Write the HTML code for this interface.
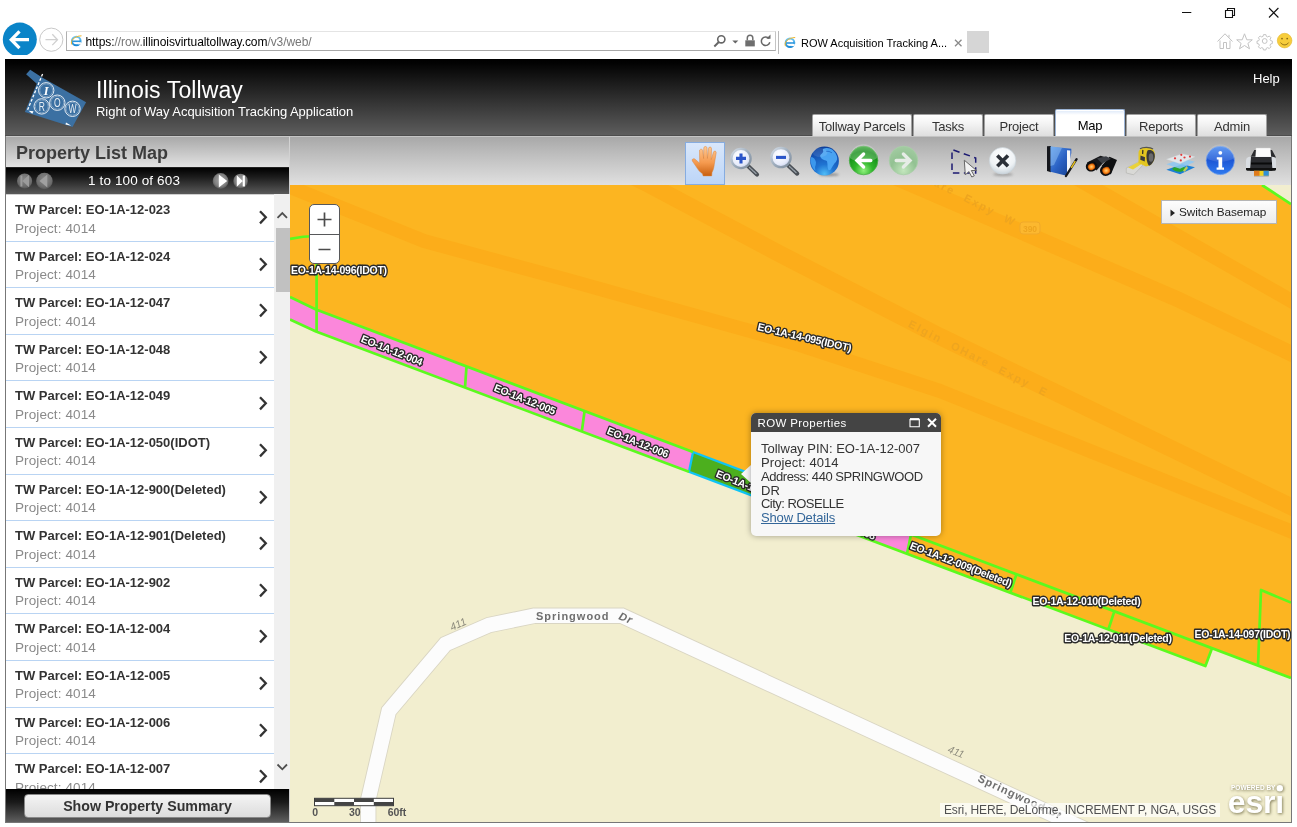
<!DOCTYPE html>
<html>
<head>
<meta charset="utf-8">
<title>ROW Acquisition Tracking Application</title>
<style>
*{box-sizing:border-box;margin:0;padding:0}
html,body{width:1297px;height:827px;overflow:hidden;background:#fff;font-family:"Liberation Sans",sans-serif;}
#chrome,#page{will-change:transform}
.abs{position:absolute}
#chrome{position:absolute;left:0;top:0;width:1297px;height:59px;background:#fff}
#addr{position:absolute;left:66px;top:31px;width:710px;height:20px;border:1px solid #b0b0b0;border-top-color:#e4e4e4;border-bottom-color:#a8a8a8;border-right-color:#c4c4c4;background:#fff}
#url{position:absolute;left:85.500px;top:34.700px;font-size:12px;line-height:14px;color:#000;letter-spacing:-.07px;white-space:nowrap}
#url span{color:#777}
#tab{position:absolute;left:779px;top:31px;width:188px;height:23px;background:#fff}
#tabtxt{position:absolute;left:801px;top:36px;font-size:11px;line-height:14px;color:#000;white-space:nowrap}
#newtab{position:absolute;left:967px;top:31px;width:22px;height:22px;background:#d6d6d6}
/* page */
#page{position:absolute;left:5px;top:59px;width:1287px;height:764px;background:#777;overflow:hidden}
#hdr{position:absolute;left:0;top:0;width:1287px;height:77px;background:linear-gradient(#000 0%,#030303 6%,#5d5d5d 100%);border-bottom:1px solid #4d4d4d}
#t1{position:absolute;left:91px;top:17px;font-size:23px;line-height:28px;color:#fff;white-space:nowrap;letter-spacing:.1px}
#t2{position:absolute;left:91px;top:45px;font-size:13px;line-height:16px;color:#fff;white-space:nowrap;letter-spacing:-.04px}
#help{position:absolute;left:1248px;top:12px;font-size:13px;line-height:15px;color:#fff}
.tab{position:absolute;top:55px;height:22px;border:1px solid #a0a0a0;border-bottom:none;border-radius:2px 2px 0 0;background:linear-gradient(#fff 0%,#f4f4f4 40%,#dedede 100%);font-size:13px;letter-spacing:-.2px;line-height:23px;text-align:center;color:#333;white-space:nowrap;box-shadow:inset 0 1px 0 #fff}
.tab.sel{top:50px;height:27px;background:linear-gradient(#dbe7f8 0,#fff 5px,#fff 100%);line-height:31px;color:#000;border-color:#9bb3d4}
/* left */
#left{position:absolute;left:1px;top:77px;width:284px;height:686px;background:#cfcfcf}
#ltitle{position:absolute;left:0;top:0;width:283px;height:31px;background:linear-gradient(#a9a9a9,#e2e2e2);border-top:1px solid #c8c8c8;font-weight:bold;font-size:18px;line-height:32px;color:#3c3c3c;padding-left:10px;white-space:nowrap}
#pager{position:absolute;left:0;top:31px;width:283px;height:27px;background:linear-gradient(#000 0%,#1c1c1c 35%,#5a5a5a 100%);border-top:1px solid #222;}
#pgtxt{position:absolute;left:82px;top:5px;font-size:13.5px;line-height:16px;color:#fff;white-space:nowrap;letter-spacing:.13px}
#list{position:absolute;left:0;top:59px;width:268px;height:594px;overflow:hidden;background:#fff}
.it{position:relative;height:46.6px;border-bottom:1px solid #b9d4f3;}
.it b{position:absolute;left:9px;top:7px;font-size:13px;line-height:16px;color:#333;white-space:nowrap;font-weight:bold}
.it i{position:absolute;left:9px;top:25.500px;font-size:13.5px;line-height:16px;color:#8a8a8a;white-space:nowrap;font-style:normal;letter-spacing:.1px}
.it svg{position:absolute;left:251px;top:13px}
#sb{position:absolute;left:268px;top:58px;width:16px;height:595px;background:#f0f0f0}
#sbth{position:absolute;left:1.500px;top:34px;width:14px;height:64px;background:#c1c1c1}
#lbot{position:absolute;left:0;top:653px;width:283px;height:33px;background:linear-gradient(#000 0%,#1a1a1a 40%,#5e5e5e 100%)}
#sps{position:absolute;left:18px;top:5px;width:247px;height:24px;background:linear-gradient(#f4f4f4,#dcdcdc);border:1px solid #888;border-radius:4px;font-weight:bold;font-size:14.2px;line-height:22px;text-align:center;color:#333}
/* toolbar */
#tbar{position:absolute;left:284px;top:77px;width:1002px;border-left:1px solid #d2d2d2;height:49px;background:linear-gradient(#a8a8a8 0%,#bdbdbd 35%,#e0e0e0 100%);border-top:1px solid #c4c4c4}
#handsel{position:absolute;left:395px;top:5px;width:40px;height:43px;border:1px solid #86ace0;background:linear-gradient(#d9e7fb,#bcd5f7)}
/* map */
#map{position:absolute;left:285px;top:126px;width:1001px;height:637px;background:#f2eecf;overflow:hidden}
</style>
</head>
<body>
<div id="chrome">
  <div id="addr"></div>
  <div id="url">https:<span>//row.</span>illinoisvirtualtollway.com<span>/v3/web/</span></div>
  <div id="tab"></div>
  <div id="tabtxt">ROW Acquisition Tracking A...</div>
  <div id="newtab"></div>
  <!--CHROMEICONS-->
<svg class="abs" style="left:0;top:0" width="1297" height="59" viewBox="0 0 1297 59">
<defs><clipPath id="bk"><rect x="0" y="0" width="60" height="55"/></clipPath>
<linearGradient id="gie" x1="0" y1="0" x2="0" y2="1"><stop offset="0" stop-color="#6cc6f5"/><stop offset="1" stop-color="#1b8ad6"/></linearGradient></defs>
<!-- back -->
<g clip-path="url(#bk)"><circle cx="19.800" cy="39.600" r="17" fill="#0a84c8"/></g>
<path d="M11.500 39.700H29M19.500 31.300L11.300 39.700L19.500 48.100" fill="none" stroke="#fff" stroke-width="3.300" stroke-linejoin="miter"/>
<!-- forward -->
<circle cx="51.300" cy="39.700" r="11.600" fill="#fff" stroke="#c9c9c9" stroke-width="1"/>
<path d="M45.500 39.700H57M52.300 34.300L57.500 39.700L52.300 45.100" fill="none" stroke="#d0d0d0" stroke-width="1.300"/>
<!-- IE favicon in address -->
<g transform="translate(71 35)"><circle cx="5.300" cy="6" r="4.300" fill="none" stroke="url(#gie)" stroke-width="2"/><path d="M1.500 6.300H9.500" stroke="#2a95dc" stroke-width="1.600"/><path d="M6.500 8.300H10" stroke="#f5f5f5" stroke-width="2.200"/><path d="M.8 9.500C-1 6 3 1 10.500 .8" fill="none" stroke="#f0b62b" stroke-width="1"/></g>
<!-- search -->
<circle cx="721.300" cy="39.300" r="3.600" fill="none" stroke="#666" stroke-width="1.600"/><path d="M718.800 42L714.300 46.500" stroke="#666" stroke-width="1.900"/>
<path d="M732.300 40.500H738.300L735.300 43.600Z" fill="#666"/>
<!-- lock -->
<path d="M745.300 40.300H754.800V46.400H745.300Z" fill="#6e6e6e"/><path d="M747.300 40.300V38C747.300 34.300 752.800 34.300 752.800 38V40.300" fill="none" stroke="#6e6e6e" stroke-width="1.500"/>
<!-- refresh -->
<path d="M769 38.500A4.300 4.300 0 1 0 769.800 42.300" fill="none" stroke="#666" stroke-width="1.500"/><path d="M766.300 38.800H770.500V34.500Z" fill="#666"/>
<!-- tab sep -->
<path d="M778.500 31V54" stroke="#b9b9b9" stroke-width="1"/>
<!-- IE favicon in tab -->
<g transform="translate(784.500 36.500)"><circle cx="5.500" cy="6.200" r="4.300" fill="none" stroke="url(#gie)" stroke-width="2"/><path d="M1.700 6.500H9.700" stroke="#2a95dc" stroke-width="1.600"/><path d="M6.700 8.500H10.200" stroke="#fff" stroke-width="2.200"/><path d="M1 9.700C-.8 6.200 3.200 1.200 10.700 1" fill="none" stroke="#f0b62b" stroke-width="1"/></g>
<!-- tab close -->
<path d="M955 39.800L961.500 46.300M961.500 39.800L955 46.300" stroke="#8a8a8a" stroke-width="1.300"/>
<!-- window controls -->
<path d="M1182 12.500H1191.300" stroke="#111" stroke-width="1"/>
<path d="M1225.500 10.500H1232.500V17.500H1225.500Z" fill="none" stroke="#111" stroke-width="1.100"/><path d="M1227.500 10.500V8.500H1234.500V15.500H1232.500" fill="none" stroke="#111" stroke-width="1.100"/>
<path d="M1269 8L1278.400 17.500M1278.400 8L1269 17.500" stroke="#111" stroke-width="1.100"/>
<!-- home -->
<path d="M1217.500 41.500L1225 33.800L1232.500 41.500M1220 40.500V48.500H1223.500V42.500H1226.500V48.500H1230V40.500M1229 37.500V34.800" fill="none" stroke="#c3c3c3" stroke-width="1"/>
<!-- star -->
<path d="M1244.500 33.800L1246.800 39.800L1252.300 39.800L1247.900 43.400L1249.500 48.800L1244.500 45.500L1239.500 48.800L1241.100 43.400L1236.700 39.800L1242.200 39.800Z" fill="none" stroke="#c3c3c3" stroke-width="1"/>
<!-- gear -->
<g fill="none" stroke="#c3c3c3" stroke-width="1.150" transform="translate(1264.700 41) scale(.86) translate(-1264.700 -41)"><circle cx="1264.700" cy="41" r="2.800"/><circle cx="1264.700" cy="41" r="5.700" stroke-dasharray="2.600 1.880" stroke-width="3.200" opacity=".0"/>
<path d="M1263.300 33.600h2.800l.5 2 1.600.7 1.800-1.100 2 2-1.100 1.800.7 1.600 2 .5v2.800l-2 .5-.7 1.600 1.100 1.800-2 2-1.800-1.100-1.600.7-.5 2h-2.800l-.5-2-1.600-.7-1.800 1.100-2-2 1.100-1.800-.7-1.600-2-.5v-2.800l2-.5.7-1.600-1.100-1.800 2-2 1.800 1.100 1.600-.7z"/></g>
<!-- smiley -->
<circle cx="1284.600" cy="40.600" r="7.300" fill="#f7cd3b" stroke="#e3b52b" stroke-width=".6"/>
<circle cx="1282" cy="38.600" r=".9" fill="#8a6a14"/><circle cx="1287.200" cy="38.600" r=".9" fill="#8a6a14"/>
<path d="M1280.600 42.600C1282.500 45.600 1286.700 45.600 1288.600 42.600" fill="none" stroke="#8a6a14" stroke-width="1"/>
</svg>
<!--/CHROMEICONS-->
</div>
<div id="page">
  <div id="hdr">
    <!--LOGO-->
<svg class="abs" style="left:0;top:0" width="120" height="77" viewBox="5 59 120 77" font-family="Liberation Sans, sans-serif">
 <path d="M26.100 74.300L30.200 69.800L42.100 77.600L86.100 102.300L72.500 126.900L24.900 112.100L36.800 83.800Z" fill="#3b70a2"/>
 <path d="M42.600 74L27.300 110.500" stroke="#fff" stroke-width="1.300" stroke-dasharray="2.800 1.700" fill="none"/>
 <path d="M28.500 110.800L33.500 111.200L32.300 113.800ZM66 122.500L71.300 125.800L65.500 124.600Z" fill="#fff"/>
 <g fill="none" stroke="#fff"><g stroke-width=".9" opacity=".95"><circle cx="46.200" cy="90.300" r="7.700"/><circle cx="41.700" cy="106.400" r="7.700"/><circle cx="57.300" cy="102.700" r="7.700"/><circle cx="72.500" cy="108.800" r="7.700"/></g>
 <g stroke-width=".5" opacity=".6"><circle cx="46.200" cy="90.300" r="6.400"/><circle cx="41.700" cy="106.400" r="6.400"/><circle cx="57.300" cy="102.700" r="6.400"/><circle cx="72.500" cy="108.800" r="6.400"/></g></g>
 <g fill="#fff" text-anchor="middle" font-size="9px">
  <text x="46.300" y="94.600" font-family="Liberation Serif, serif" font-style="italic" font-weight="bold" font-size="12.500px">I</text>
  <g font-size="12.500px" opacity=".88"><text transform="translate(41.800 110.900) scale(.68 1)">R</text><text transform="translate(57.400 107.200) scale(.68 1)">O</text><text transform="translate(72.600 113.300) scale(.68 1)">W</text></g></g>
</svg>
<!--/LOGO-->
    <div id="t1">Illinois Tollway</div>
    <div id="t2">Right of Way Acquisition Tracking Application</div>
    <div id="help">Help</div>
    <div class="tab" style="left:807px;width:100px">Tollway Parcels</div>
    <div class="tab" style="left:908px;width:70px">Tasks</div>
    <div class="tab" style="left:979px;width:70px">Project</div>
    <div class="tab sel" style="left:1050px;width:70px">Map</div>
    <div class="tab" style="left:1121px;width:70px">Reports</div>
    <div class="tab" style="left:1192px;width:70px">Admin</div>
  </div>
  <div id="left">
    <div id="ltitle">Property List Map</div>
    <div id="pager">
      <!--PAGERICONS-->
<svg class="abs" style="left:0;top:-1px" width="283" height="27" viewBox="6 167 283 27">
 <defs><radialGradient id="gpd" cx=".5" cy=".4" r=".65"><stop offset="0" stop-color="#8a8a8a"/><stop offset=".7" stop-color="#6c6c6c"/><stop offset="1" stop-color="#4e4e4e"/></radialGradient>
 <radialGradient id="gpl" cx=".5" cy=".45" r=".6"><stop offset="0" stop-color="#a6a6a6"/><stop offset=".65" stop-color="#808080"/><stop offset="1" stop-color="#4a4a4a"/></radialGradient></defs>
 <circle cx="24.600" cy="181" r="7.600" fill="url(#gpd)"/><path d="M20.400 175.600H22.400V186.400H20.400ZM29 174.800V187.200L22.400 181Z" fill="#9b9b9b"/>
 <circle cx="44.400" cy="181" r="8.300" fill="url(#gpd)"/><path d="M47.300 174.500V187.500L39.500 181Z" fill="#a0a0a0"/>
 <circle cx="220.600" cy="181" r="7.900" fill="url(#gpl)"/><path d="M218.800 174.500V187.500L227.200 181Z" fill="#fff"/>
 <circle cx="240.600" cy="181" r="7.300" fill="url(#gpl)"/><path d="M244.900 175.600H242.700V186.400H244.900ZM236.800 175.200V186.800L242.700 181Z" fill="#fff"/>
</svg>
<!--/PAGERICONS-->
      <div id="pgtxt">1 to 100 of 603</div>
    </div>
    <div id="list">
      <div class="it"><b>TW Parcel: EO-1A-12-023</b><i>Project: 4014</i><svg width="12" height="18" viewBox="0 0 12 18"><path d="M3 3.200L8.800 9.300L3 15.400" fill="none" stroke="#333" stroke-width="2.300"/></svg></div>
      <div class="it"><b>TW Parcel: EO-1A-12-024</b><i>Project: 4014</i><svg width="12" height="18" viewBox="0 0 12 18"><path d="M3 3.200L8.800 9.300L3 15.400" fill="none" stroke="#333" stroke-width="2.300"/></svg></div>
      <div class="it"><b>TW Parcel: EO-1A-12-047</b><i>Project: 4014</i><svg width="12" height="18" viewBox="0 0 12 18"><path d="M3 3.200L8.800 9.300L3 15.400" fill="none" stroke="#333" stroke-width="2.300"/></svg></div>
      <div class="it"><b>TW Parcel: EO-1A-12-048</b><i>Project: 4014</i><svg width="12" height="18" viewBox="0 0 12 18"><path d="M3 3.200L8.800 9.300L3 15.400" fill="none" stroke="#333" stroke-width="2.300"/></svg></div>
      <div class="it"><b>TW Parcel: EO-1A-12-049</b><i>Project: 4014</i><svg width="12" height="18" viewBox="0 0 12 18"><path d="M3 3.200L8.800 9.300L3 15.400" fill="none" stroke="#333" stroke-width="2.300"/></svg></div>
      <div class="it"><b>TW Parcel: EO-1A-12-050(IDOT)</b><i>Project: 4014</i><svg width="12" height="18" viewBox="0 0 12 18"><path d="M3 3.200L8.800 9.300L3 15.400" fill="none" stroke="#333" stroke-width="2.300"/></svg></div>
      <div class="it"><b>TW Parcel: EO-1A-12-900(Deleted)</b><i>Project: 4014</i><svg width="12" height="18" viewBox="0 0 12 18"><path d="M3 3.200L8.800 9.300L3 15.400" fill="none" stroke="#333" stroke-width="2.300"/></svg></div>
      <div class="it"><b>TW Parcel: EO-1A-12-901(Deleted)</b><i>Project: 4014</i><svg width="12" height="18" viewBox="0 0 12 18"><path d="M3 3.200L8.800 9.300L3 15.400" fill="none" stroke="#333" stroke-width="2.300"/></svg></div>
      <div class="it"><b>TW Parcel: EO-1A-12-902</b><i>Project: 4014</i><svg width="12" height="18" viewBox="0 0 12 18"><path d="M3 3.200L8.800 9.300L3 15.400" fill="none" stroke="#333" stroke-width="2.300"/></svg></div>
      <div class="it"><b>TW Parcel: EO-1A-12-004</b><i>Project: 4014</i><svg width="12" height="18" viewBox="0 0 12 18"><path d="M3 3.200L8.800 9.300L3 15.400" fill="none" stroke="#333" stroke-width="2.300"/></svg></div>
      <div class="it"><b>TW Parcel: EO-1A-12-005</b><i>Project: 4014</i><svg width="12" height="18" viewBox="0 0 12 18"><path d="M3 3.200L8.800 9.300L3 15.400" fill="none" stroke="#333" stroke-width="2.300"/></svg></div>
      <div class="it"><b>TW Parcel: EO-1A-12-006</b><i>Project: 4014</i><svg width="12" height="18" viewBox="0 0 12 18"><path d="M3 3.200L8.800 9.300L3 15.400" fill="none" stroke="#333" stroke-width="2.300"/></svg></div>
      <div class="it"><b>TW Parcel: EO-1A-12-007</b><i>Project: 4014</i><svg width="12" height="18" viewBox="0 0 12 18"><path d="M3 3.200L8.800 9.300L3 15.400" fill="none" stroke="#333" stroke-width="2.300"/></svg></div>
    </div>
    <div id="sb"><div id="sbth"></div><!--SBARROWS-->
<svg class="abs" style="left:0;top:0" width="16" height="595"><path d="M3.500 23.800L8.300 19L13 23.800M3.500 570.500L8.300 575.300L13 570.500" fill="none" stroke="#505050" stroke-width="1.800"/></svg>
<!--/SBARROWS--></div>
    <div id="lbot"><div id="sps">Show Property Summary</div></div>
  </div>
  <div id="tbar">
    <div id="handsel"></div>
    <!--TBICONS-->
<svg class="abs" style="left:0;top:-1px" width="1001" height="49" viewBox="290 136 1001 49">
<defs>
 <linearGradient id="gHand" x1="0" y1="0" x2="0" y2="1"><stop offset="0" stop-color="#ffc993"/><stop offset=".55" stop-color="#f59a4f"/><stop offset="1" stop-color="#c85f10"/></linearGradient>
 <radialGradient id="gLens" cx=".4" cy=".35" r=".7"><stop offset="0" stop-color="#ffffff"/><stop offset=".7" stop-color="#e6ebfa"/><stop offset="1" stop-color="#c3cdea"/></radialGradient>
 <linearGradient id="gRim" x1="0" y1="0" x2="1" y2="1"><stop offset="0" stop-color="#d5dde6"/><stop offset=".5" stop-color="#9eadbd"/><stop offset="1" stop-color="#7d8b9a"/></linearGradient>
 <radialGradient id="gGlobe" cx=".5" cy=".95" r=".95"><stop offset="0" stop-color="#4fbcf7"/><stop offset=".35" stop-color="#1f74d2"/><stop offset=".75" stop-color="#1553b4"/><stop offset="1" stop-color="#0d3f9a"/></radialGradient>
 <radialGradient id="gGreen" cx=".5" cy=".85" r=".9"><stop offset="0" stop-color="#8ff07c"/><stop offset=".35" stop-color="#2fb52b"/><stop offset=".75" stop-color="#118a16"/><stop offset="1" stop-color="#3fae3c"/></radialGradient>
 <radialGradient id="gGreenD" cx=".5" cy=".85" r=".9"><stop offset="0" stop-color="#c3e6bd"/><stop offset=".5" stop-color="#92c192"/><stop offset="1" stop-color="#a5cda4"/></radialGradient>
 <radialGradient id="gWhite" cx=".5" cy=".3" r=".8"><stop offset="0" stop-color="#ffffff"/><stop offset=".6" stop-color="#eef2f5"/><stop offset="1" stop-color="#b9c6cf"/></radialGradient>
 <linearGradient id="gInfo" x1="0" y1="0" x2="0" y2="1"><stop offset="0" stop-color="#4c8cf0"/><stop offset=".5" stop-color="#1d57d6"/><stop offset="1" stop-color="#2f7bf0"/></linearGradient>
 <linearGradient id="gBook" x1="0" y1="0" x2="1" y2="1"><stop offset="0" stop-color="#5b9bea"/><stop offset=".5" stop-color="#2a61c4"/><stop offset="1" stop-color="#16408f"/></linearGradient>
 <radialGradient id="gOr" cx=".5" cy=".5" r=".5"><stop offset="0" stop-color="#ffd27a"/><stop offset=".6" stop-color="#ff8a1c"/><stop offset="1" stop-color="#b34a00"/></radialGradient>
 <filter id="sh1" x="-30%" y="-30%" width="160%" height="160%"><feGaussianBlur stdDeviation="0.8"/></filter>
</defs>
<!-- hand -->
<g>
 <path d="M699.5 150.2c.9-1.6 3-1.2 3.2.4l.9 8 .2-10.700c.2-1.900 3-1.900 3.200 0l.400 10.600 1.200-10.300c.300-1.700 2.900-1.500 2.900.300l-.300 11.200 2.300-7.700c.600-1.600 2.900-1 2.700.700l-1.900 11.500c-.400 3.600-.900 5.600-2.300 8.300l-.300 3.400h-8.600l-.600-2.200c-2.900-1.900-4.300-3.800-6.200-6.900l-3.900-5.700c-1-1.600.800-3.100 2.400-2.100l4.900 4.200z" fill="url(#gHand)" stroke="#d8853f" stroke-width=".5"/>
</g>
<!-- zoom in -->
<g>
 <path d="M748.3 166.3L757 174.500" stroke="#4a4f55" stroke-width="4.200" stroke-linecap="round"/>
 <path d="M749.5 167.500L756.500 174" stroke="#9aa3ab" stroke-width="1.300" stroke-linecap="round" stroke-dasharray="1 1"/>
 <circle cx="741" cy="158.500" r="9.600" fill="url(#gLens)" stroke="url(#gRim)" stroke-width="2.300"/>
 <path d="M736 158.400H746M741 153.400V163.400" stroke="#2b55c9" stroke-width="3.100"/>
</g>
<!-- zoom out -->
<g>
 <path d="M788.300 165.400L797.200 173.600" stroke="#4a4f55" stroke-width="4.200" stroke-linecap="round"/>
 <path d="M789.500 166.500L796.500 173" stroke="#9aa3ab" stroke-width="1.300" stroke-linecap="round" stroke-dasharray="1 1"/>
 <circle cx="781" cy="157.600" r="9.600" fill="url(#gLens)" stroke="url(#gRim)" stroke-width="2.300"/>
 <path d="M776 157.400H786" stroke="#2b55c9" stroke-width="3.100"/>
</g>
<!-- globe -->
<g>
 <ellipse cx="829" cy="174.600" rx="10" ry="1.700" fill="#555" opacity=".5" filter="url(#sh1)"/>
 <circle cx="824.500" cy="161" r="14.400" fill="url(#gGlobe)"/>
 <path d="M822.900 148.900Q825 147.800 827 148Q830 148.300 832.500 149.800Q835.500 152.500 836.700 155.800Q837.400 157.600 837.100 159.400Q836.300 161.800 834.400 163.600Q832.300 166.800 830.700 169.500Q829.500 170.600 828.400 170Q827.600 168 827.500 165.900Q827.500 163.500 827 161.300Q826 160.400 824.700 160.300Q822.800 159.800 821.500 158.500Q820.300 157.300 820.100 155.800Q820.600 154.400 822 153.500Q822.900 152.400 823.300 151.200Q822.700 150 822.900 148.900Z" fill="#4ea9f6" opacity=".92"/>
 <path d="M826 151.300Q829 150.800 832 152.800" stroke="#1d5fbf" stroke-width="1" fill="none" opacity=".7"/>
 <path d="M811.400 157.100Q813 157.300 814.200 158.500Q815.600 160.200 816 162.200Q816 164.500 815.100 166.800Q815 169 815.600 170.900Q813.800 169.700 812.800 167.700Q811.300 165.300 810.700 162.600Q810.200 161 810.500 159.400Q810.700 158 811.400 157.100Z" fill="#3f9df2" opacity=".9"/>
 <ellipse cx="820" cy="152.500" rx="7.500" ry="4.500" fill="#fff" opacity=".10"/>
</g>
<!-- back -->
<g>
 <circle cx="863.600" cy="160.500" r="14.300" fill="url(#gGreen)" stroke="#4fb04b" stroke-width=".8"/>
 <path d="M849.800 158a13.800 13.800 0 0 1 27.600 0c-6 4.500-20 5.500-27.600 0z" fill="#fff" opacity=".22"/>
 <path d="M858 160.500H870.800M863.600 154L857 160.500L863.600 167" fill="none" stroke="#fff" stroke-width="3.400" stroke-linecap="round" stroke-linejoin="miter"/>
</g>
<!-- forward (disabled) -->
<g>
 <circle cx="903.500" cy="160.500" r="14.300" fill="url(#gGreenD)" stroke="#a9cfa8" stroke-width=".8"/>
 <path d="M909 160.500H896.200M903.400 154L910 160.500L903.400 167" fill="none" stroke="#e6ece6" stroke-width="3.400" stroke-linecap="round" stroke-linejoin="miter"/>
</g>
<!-- select -->
<g>
 <path d="M952 173V149.500L975.700 158V173H952" fill="none" stroke="#1c1a72" stroke-width="1.500" stroke-dasharray="6.500 4.500" stroke-dashoffset="-3"/>
 <path d="M964.300 160.200L976.500 170.500H971.300L974.300 175.800L971.800 177L968.800 171.500L965.300 175Z" fill="#f2f2f2" stroke="#666" stroke-width="1"/>
</g>
<!-- clear -->
<g>
 <ellipse cx="1003" cy="174.500" rx="10" ry="1.800" fill="#666" opacity=".4" filter="url(#sh1)"/>
 <circle cx="1002.600" cy="160.800" r="13.300" fill="url(#gWhite)" stroke="#c7d2d9" stroke-width=".6"/>
 <path d="M997.300 155.500L1008 166.300M1008 155.500L997.300 166.300" stroke="#2b3038" stroke-width="3.600" stroke-linecap="butt"/>
</g>
<!--TB2-->
<!-- book -->
<g>
 <path d="M1047 146.300L1051 146L1051 172.200L1047 171Z" fill="#15171c"/>
 <path d="M1050.500 146.500L1071.300 148.800L1071.300 153L1066.500 175.800L1050.500 171.800Z" fill="url(#gBook)"/>
 <path d="M1067 150.200L1070.300 150.600L1070.300 168L1067 172.500Z" fill="#f4f6fa"/>
 <path d="M1050.500 146.500L1062 147.800L1054 165L1050.500 166Z" fill="#9ccaf8" opacity=".45"/>
 <path d="M1076.600 159.200L1066 176" stroke="#17181c" stroke-width="2.300" stroke-linecap="round"/>
 <path d="M1075.300 161.200L1071.200 167.800" stroke="#e8c21d" stroke-width="1.500"/>
</g>
<!-- binoculars -->
<g>
 <path d="M1087 162.500L1100.500 155.800L1107.500 157.800L1096.500 170.500Z" fill="#17181b"/>
 <path d="M1101.500 166L1109.500 156.800L1117 160L1110.800 174.500Z" fill="#0e0f11"/>
 <path d="M1097 158.500L1106 156.300L1111 158.800L1102 163.500Z" fill="#3b3e44"/>
 <ellipse cx="1091.400" cy="166.300" rx="5.700" ry="5.200" fill="#0d0e10" transform="rotate(-20 1091.400 166.300)"/>
 <ellipse cx="1106" cy="170.200" rx="6.100" ry="5.600" fill="#0d0e10" transform="rotate(-20 1106 170.200)"/>
 <ellipse cx="1091.500" cy="166.800" rx="3.700" ry="3.300" fill="url(#gOr)" transform="rotate(-20 1091.500 166.800)"/>
 <ellipse cx="1106.200" cy="170.600" rx="4" ry="3.600" fill="url(#gOr)" transform="rotate(-20 1106.200 170.600)"/>
</g>
<!-- tape -->
<g>
 <path d="M1126.300 168L1139 161.500L1144 164L1133.600 174.800L1126.300 173Z" fill="#d9d9d6" stroke="#a9a9a4" stroke-width=".5"/>
 <path d="M1128 167.500L1140 161.300L1143 163L1133 169.500Z" fill="#e9d23a"/>
 <path d="M1138.500 152.500C1139 148.500 1143.500 146.500 1148.500 147.200C1153.500 148 1155.300 151.500 1154.800 156.500C1154.300 161 1152 164.500 1149 165.800L1146 166.500L1138.500 163Z" fill="#e3c620"/>
 <path d="M1147.500 150.500C1151.500 149 1155 151.500 1154.800 156.500C1154.500 161 1152 164.500 1149 165.800C1146.500 163 1145.500 154.500 1147.500 150.500Z" fill="#3a3a3a"/>
 <ellipse cx="1151" cy="157.500" rx="2.300" ry="4.300" fill="#6a6a6a"/>
 <path d="M1140 148.800C1143 146.800 1150 146.800 1153 149" stroke="#555" stroke-width="1.300" fill="none"/>
 <path d="M1140.500 155.500L1145 157.300L1144.700 161.500L1140.300 159.700Z" fill="#3c3c3c"/>
 <path d="M1142.300 149.800L1143.500 150.200L1143.200 154.200L1142 153.800Z" fill="#2a2a2a"/>
</g>
<!-- layers -->
<g>
 <path d="M1166.300 169.800L1182 164.200L1195 167.300L1180 174.200Z" fill="#1c7fd6"/>
 <path d="M1172 168.800C1175 166 1180 165.500 1184 167C1186 168 1185 170.500 1182 171.500C1178 172.500 1174 171 1172 168.800Z" fill="#2aa52b"/>
 <path d="M1183 170.500L1186.500 166L1188 168L1184.500 172Z" fill="#d9d84a" opacity=".85"/>
 <path d="M1166.300 164.300L1182 158.700L1195 161.800L1180 168.700Z" fill="#8cc8f4" opacity=".85"/>
 <path d="M1166.300 159.300L1182 153.700L1195 156.800L1180 163.700Z" fill="#e6e9ec" opacity=".92" stroke="#c9ced3" stroke-width=".3"/>
 <g fill="#e23a3a"><circle cx="1181.300" cy="154.800" r="1.100"/><circle cx="1175" cy="158.300" r="1.100"/><circle cx="1184.500" cy="157.500" r="1.100"/><circle cx="1190" cy="156.600" r="1.100"/><circle cx="1180.800" cy="160.400" r="1.100"/></g>
</g>
<!-- info -->
<g>
 <circle cx="1220.300" cy="160.500" r="14.200" fill="url(#gInfo)" stroke="#7ea6e8" stroke-width=".7"/>
 <path d="M1206.500 158a13.800 13.800 0 0 1 27.600 0c-7 5-21 5-27.600 0z" fill="#fff" opacity=".12"/>
 <circle cx="1220.300" cy="152.800" r="1.900" fill="#fff"/>
 <path d="M1216.800 157.200H1222.200V167.600H1224V169.800H1216.600V167.600H1218.500V159.400H1216.800Z" fill="#fff"/>
</g>
<!-- printer -->
<g>
 <path d="M1255.300 157.500L1256 148H1270.500L1271.200 157.500Z" fill="#fbfbfb" stroke="#cfcfcf" stroke-width=".4"/>
 <path d="M1250.300 157.500L1254.300 150H1255.900L1255.300 157.500ZM1276 157.500L1272 150H1270.600L1271.200 157.500Z" fill="#2a2b2e"/>
 <path d="M1246 160.500C1246 158 1248 156.800 1250 156.800H1272C1274.500 156.800 1276 158 1276 160.500V168.500C1276 170 1275 170.800 1273.500 170.800H1248.500C1247 170.800 1246 170 1246 168.500Z" fill="#d9dde2"/>
 <path d="M1251 157H1271.500L1272.500 170.800H1250Z" fill="#2b2c30"/>
 <path d="M1251 162.500H1272V164.500H1251Z" fill="#0a0a0b"/>
 <path d="M1246 168H1276V169.500C1276 170.500 1275 170.800 1273.500 170.800H1248.500C1247 170.800 1246 170.500 1246 169.500Z" fill="#111"/>
 <path d="M1254 170.800H1268.800V175.800H1254Z" fill="#f0d21d"/>
 <path d="M1254 170.800H1259.500V175.800H1254Z" fill="#e07a1b"/>
 <path d="M1263.500 170.800H1268.800V175.800H1263.500Z" fill="#2f8fd8"/>
 <path d="M1254 176.300H1268.800" stroke="#999" stroke-width=".6"/>
</g>
<!--/TB2-->
</svg>
<!--/TBICONS-->
  </div>
  <div id="map">
    <!--MAPSVG--><svg class="abs" style="left:0;top:0" width="1001" height="637" viewBox="290 185 1001 637" font-family="Liberation Sans, sans-serif">
<path d="M290 185 L1262 185 L1291 204 L1291 678.0 L316 309.5 L290 297 Z" fill="#fcb521"/>
<g fill="none" stroke="#fcad1a" stroke-linejoin="round">
<path d="M280 183L424 241L565 279.300L800 345L940 391L1300 535" stroke-width="14"/>
<path d="M620 170L650 185L780 254L940 336.500L1300 511" stroke-width="17"/>
<path d="M878 170L913 185L1180 300.300L1300 357.700" stroke-width="15.800"/>
<path d="M1062 170L1300 305.800" stroke-width="14.300"/>
</g>
<path d="M290 297 L316 309.5 L911 534.4 L907 553.8 L316 331.6 L290 319.6 Z" fill="#fb87db"/>
<path d="M911 534.4 L1212 648.2 L1205.4 666.0 L907 553.8 Z" fill="#fcb521"/>
<path d="M693 452.0 L800 492.5 L796 512.1 L689 471.8 Z" fill="#4caf1e" stroke="#0fc4f5" stroke-width="2.300" stroke-linejoin="miter"/>
<path d="M290 297 L316 309.5 L693 452.0 M800 492.5 L1291 678.0 M290 319.6 L316 331.6 L689 471.8 M796 512.1 L1205.4 666.0 L1212 648.2 M290 239 Q303 236 316.6 236 L316.6 331.6 M466.5 366.4 L465 387.6 M584.6 411.0 L581.8 431.5 M911 534.4 L907 553.8 M1016.4 574.3 L1010.4 592.7 M1114.3 611.3 L1108.4 629.5 M1291 602.6 L1261 590 L1258 665.6 M1262 185 L1291 204" fill="none" stroke="#5cfa1e" stroke-width="2.700" stroke-linejoin="round"/>
<path d="M368.200 830 L368.200 800 L388.800 711 L445.500 644 L489 625 L534 615.8 L622 615.8 L850 721 L1069 822 L1100 836" fill="none" stroke="#d9d5c3" stroke-width="16.4" stroke-linejoin="miter"/>
<path d="M368.200 830 L368.200 800 L388.800 711 L445.500 644 L489 625 L534 615.8 L622 615.8 L850 721 L1069 822 L1100 836" fill="none" stroke="#fcfcfc" stroke-width="14.6" stroke-linejoin="miter"/>
<g fill="#6e6e6e" font-weight="bold" font-size="11px" letter-spacing="1px">
<text x="536" y="620">Springwood</text>
<text x="0" y="0" transform="translate(618 619) rotate(22)" font-style="italic">Dr</text>
<text x="0" y="0" transform="translate(977 781) rotate(24.8)">Springwood Dr</text>
</g>
<g fill="#8c8a7c" font-size="10.5px" font-style="italic">
<text transform="translate(452 631) rotate(-25)">411</text>
<text transform="translate(947 752) rotate(22)">411</text>
</g>
<g fill="#eea51f" font-weight="bold" font-size="11px" letter-spacing="1.5px" word-spacing="6px">
<text transform="translate(907.500 326.500) rotate(27)" letter-spacing="1.950px">Elgin  OHare  Expy  E</text>
<text transform="translate(915 176) rotate(27)" letter-spacing="1.950px">OHare  Expy  W</text>
</g>
<rect x="1020" y="222" width="20" height="12" rx="3" fill="#fcb82f" stroke="#f0a92a" stroke-width="1"/><text x="1030" y="231.5" text-anchor="middle" font-size="8.5px" fill="#eea51f" font-weight="bold">390</text>
<g fill="#fff" stroke="#2a2a2a" stroke-width="2.800" stroke-linejoin="round" paint-order="stroke" font-weight="bold" letter-spacing="-0.25px">
<text x="291" y="273.700" font-size="10.5px">EO-1A-14-096(IDOT)</text>
<text transform="translate(392 350) rotate(22)" text-anchor="middle" y="4" font-size="10.5px">EO-1A-12-004</text>
<text transform="translate(525 399) rotate(22)" text-anchor="middle" y="4" font-size="10.5px">EO-1A-12-005</text>
<text transform="translate(638 442) rotate(22)" text-anchor="middle" y="4" font-size="10.5px">EO-1A-12-006</text>
<text transform="translate(747 485) rotate(22)" text-anchor="middle" y="4" font-size="10.5px">EO-1A-12-007</text>
<text transform="translate(845 524) rotate(22)" text-anchor="middle" y="4" font-size="10.5px">EO-1A-12-008</text>
<text transform="translate(804.5 337) rotate(13)" text-anchor="middle" y="4" font-size="10.5px">EO-1A-14-095(IDOT)</text>
<text transform="translate(961 564) rotate(21)" text-anchor="middle" y="4" font-size="10.5px">EO-1A-12-009(Deleted)</text>
<text transform="translate(1086.5 601.3) rotate(0)" text-anchor="middle" y="4" font-size="10.5px">EO-1A-12-010(Deleted)</text>
<text transform="translate(1118 638.3) rotate(0)" text-anchor="middle" y="4" font-size="10.5px">EO-1A-12-011(Deleted)</text>
<text x="1194.5" y="637.5" font-size="10.5px">EO-1A-14-097(IDOT)</text>
</g>
</svg><!--/MAPSVG-->
    <!--MAPUI-->
<style>
#zoom{position:absolute;left:19px;top:19px;width:30.500px;height:60px;border:1px solid #57585a;border-radius:5px;background:#fff;overflow:hidden}
#zoom div{position:absolute;left:0;width:29px;height:30px}
#zoom .ln{top:29px;height:1px;background:#57585a}
#bm{position:absolute;left:871px;top:15px;width:116px;height:24px;background:linear-gradient(#fdfdfd,#ececec);border:1px solid #b5b5b5;font-size:11.800px;letter-spacing:-.05px;line-height:22px;color:#222;white-space:nowrap}
#bm span{position:absolute;left:17px;top:0}
#pop{position:absolute;left:461px;top:228px;width:190px;height:123px;border-radius:5px;background:#f7f7f7;box-shadow:0 0 6px rgba(0,0,0,.35)}
#pop .tt{position:absolute;left:0;top:0;width:190px;height:19px;background:#444;border-radius:5px 5px 0 0;color:#fff;font-size:11.500px;line-height:21px;padding-left:6.500px;letter-spacing:.38px;white-space:nowrap;overflow:hidden}
#pop .ln{position:absolute;left:10px;font-size:13px;line-height:15px;color:#333;white-space:nowrap}
#pop a{color:#336699;text-decoration:underline}
#ptr{position:absolute;left:451px;top:280px;width:0;height:0;border-top:9px solid transparent;border-bottom:9px solid transparent;border-right:10px solid #f7f7f7}
#attr{position:absolute;left:650px;top:618px;width:280px;height:14px;background:rgba(255,255,255,.68);font-size:12px;line-height:14px;color:#505050;padding-left:4px;white-space:nowrap;letter-spacing:-.13px}
</style>
<div id="zoom"><div class="ln"></div>
<svg class="abs" style="left:0;top:0" width="29" height="59"><path d="M7.5 14.5H21.5M14.5 7.5V21.5M8.5 44.5H20.5" stroke="#4c4c4c" stroke-width="1.7" fill="none"/></svg></div>
<div id="bm"><svg class="abs" style="left:8px;top:8px" width="6" height="8"><path d="M0.5 0.5L5 4L0.5 7.5Z" fill="#222"/></svg><span>Switch Basemap</span></div>
<div id="ptr"></div>
<div id="pop">
 <div class="tt">ROW Properties</div>
 <svg class="abs" style="left:158px;top:5px" width="30" height="10"><path d="M1 1.2H10.3" stroke="#fff" stroke-width="2.2"/><path d="M1 1V8.8H10.3V1" stroke="#fff" stroke-width="1.1" fill="none"/><path d="M19 0.8L27 8.8M27 0.8L19 8.8" stroke="#fff" stroke-width="2"/></svg>
 <div class="ln" style="top:28px">Tollway PIN: EO-1A-12-007</div>
 <div class="ln" style="top:42px;letter-spacing:.08px">Project: 4014</div>
 <div class="ln" style="top:55.6px;letter-spacing:-.45px">Address: 440 SPRINGWOOD</div>
 <div class="ln" style="top:69.5px">DR</div>
 <div class="ln" style="top:83.2px;letter-spacing:-.53px">City: ROSELLE</div>
 <div class="ln" style="top:97px;letter-spacing:-.15px"><a>Show Details</a></div>
</div>
<svg class="abs" style="left:20px;top:608px" width="110" height="30" font-family="Liberation Sans, sans-serif">
 <rect x="4.500" y="5.300" width="79" height="7.400" fill="#fff" stroke="#3c3c3c" stroke-width="1"/>
 <path d="M5 5.300H24.300V9H5ZM24.300 9H44V12.700H24.300ZM44 5.300H63.800V9H44ZM63.800 9H83.500V12.700H63.800Z" fill="#444"/>
 <g font-size="10.500px" font-weight="bold" fill="#555"><text x="2.300" y="23.400">0</text><text x="39" y="23.400">30</text><text x="77.700" y="23.400">60ft</text></g>
</svg>
<div id="attr">Esri, HERE, DeLorme, INCREMENT P, NGA, USGS</div>
<svg class="abs" style="left:931px;top:594px" width="70" height="42" font-family="Liberation Sans, sans-serif">
 <defs><filter id="esh" x="-20%" y="-20%" width="140%" height="140%"><feGaussianBlur stdDeviation="1.5"/></filter></defs>
 <g filter="url(#esh)" fill="#6f6a45" opacity=".9"><text x="7.500" y="35" font-size="32px" font-weight="bold" letter-spacing="-.2px">esr&#305;</text><text x="10.500" y="11.800" font-size="6.500px" font-weight="bold">POWERED BY</text><circle cx="59.300" cy="9.700" r="3.600"/></g>
 <g fill="#fff"><text x="6.800" y="34.200" font-size="32px" font-weight="bold" letter-spacing="-.2px">esr&#305;</text><text x="10" y="11.200" font-size="6.500px" font-weight="bold">POWERED BY</text><circle cx="58.800" cy="9.200" r="3.200"/></g>
</svg>
<!--/MAPUI-->
  </div>
</div>
</body>
</html>
